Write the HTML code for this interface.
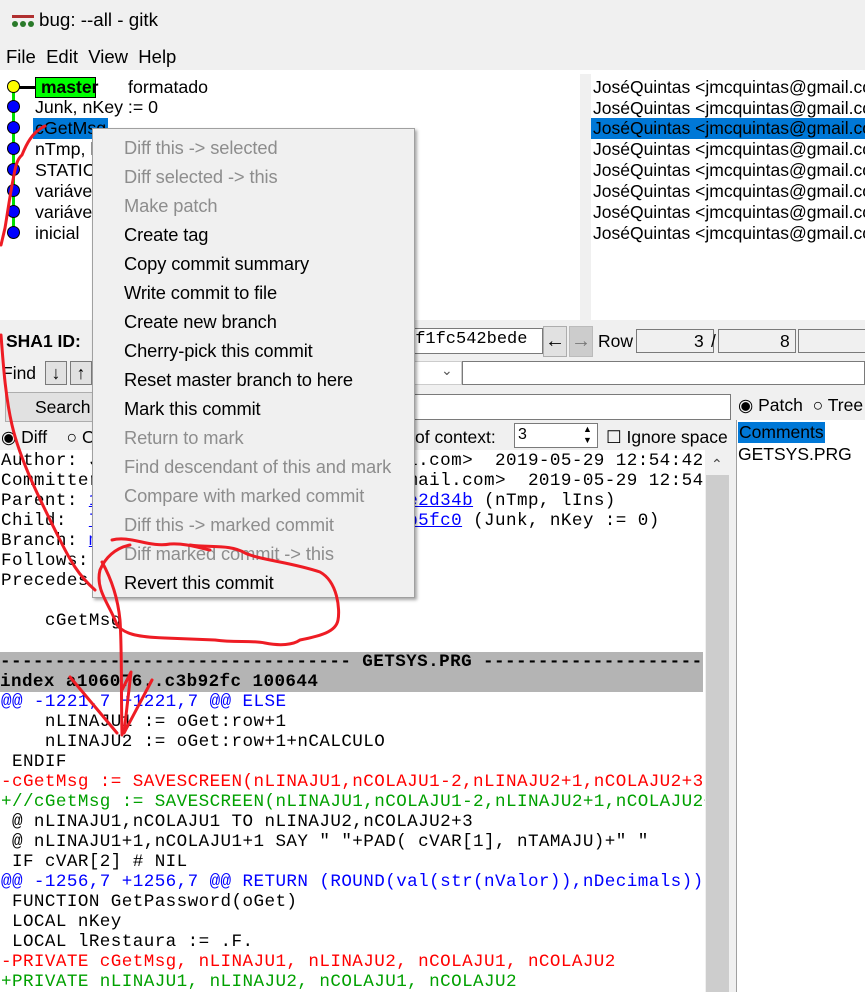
<!DOCTYPE html>
<html><head><meta charset="utf-8"><style>
*{box-sizing:border-box;margin:0;padding:0}
body{width:865px;height:992px;overflow:hidden;background:#f0f0f0;font-family:"Liberation Sans",sans-serif;position:relative;color:#000}
.a{position:absolute;white-space:pre}
.s{font-size:17.5px}
.mono{font-family:"Liberation Mono",monospace;font-size:17.6px;letter-spacing:0.42px}
.row{position:absolute;left:35px;font-size:17.8px;line-height:21px}
.auth{position:absolute;left:593px;font-size:17.5px;line-height:21px;white-space:pre}
.dot{position:absolute;left:7px;width:13px;height:13px;border-radius:50%;background:#0000ff;border:1px solid #000}
.menu{position:absolute;left:92px;top:128px;width:323px;height:470px;background:#f0f0f0;border:1px solid #a0a0a0;box-shadow:2px 2px 3px rgba(0,0,0,.35)}
.mi{position:absolute;left:31px;font-size:18.3px;white-space:pre;letter-spacing:-0.1px;line-height:20px}
.dis{color:#8d8d8d}
.box{position:absolute;background:#f0f0f0;border:1px solid #7a7a7a}
.ln{position:absolute;left:1px;line-height:20px;height:20px;white-space:pre}
</style></head><body>
<!-- title -->
<div class="a" style="left:12px;top:12px;width:22px;height:16px">
<div style="position:absolute;left:0;top:3px;width:22px;height:3px;background:#b03030"></div>
<div style="position:absolute;left:0;top:9px;width:6px;height:6px;border-radius:50%;background:#2a7a2a"></div>
<div style="position:absolute;left:8px;top:9px;width:6px;height:6px;border-radius:50%;background:#2a7a2a"></div>
<div style="position:absolute;left:16px;top:9px;width:6px;height:6px;border-radius:50%;background:#2a7a2a"></div>
</div>
<div class="a" style="left:39px;top:9px;font-size:18.8px">bug: --all - gitk</div>
<div class="a" style="left:6px;top:46px;font-size:18.5px">File&nbsp;&nbsp;Edit&nbsp;&nbsp;View&nbsp;&nbsp;Help</div>
<div class="a" style="left:0;top:70px;width:865px;height:4px;background:#fff"></div>

<!-- graph pane -->
<div class="a" style="left:0;top:74px;width:580px;height:246px;background:#fff"></div>
<div class="a" style="left:12px;top:87px;width:3px;height:146px;background:#00e000"></div>
<div class="a" style="left:14px;top:86px;width:22px;height:3px;background:#000"></div>
<div class="dot" style="top:80px;background:#ffff00"></div>
<div class="dot" style="top:100px"></div><div class="dot" style="top:121px"></div><div class="dot" style="top:142px"></div><div class="dot" style="top:163px"></div><div class="dot" style="top:184px"></div><div class="dot" style="top:205px"></div><div class="dot" style="top:226px"></div>
<div class="a" style="left:35px;top:77px;width:61px;height:21px;background:#00ff00;border:1px solid #000;font-weight:bold;font-size:17.5px;line-height:19px;padding-left:5px">master</div>
<div class="row" style="left:128px;top:77px">formatado</div>
<div class="row" style="top:97px">Junk, nKey := 0</div>
<div class="row" style="top:118px;left:33px;background:#0078d7;padding:0 2px;width:75px;height:21px">cGetMsg</div>
<div class="row" style="top:139px">nTmp, lIns</div>
<div class="row" style="top:160px">STATIC</div>
<div class="row" style="top:181px">variáveis</div>
<div class="row" style="top:202px">variáveis</div>
<div class="row" style="top:223px">inicial</div>

<!-- author pane -->
<div class="a" style="left:591px;top:74px;width:274px;height:246px;background:#fff;overflow:hidden">
<div class="auth" style="left:2px;top:3px">JoséQuintas &lt;jmcquintas@gmail.com&gt;</div>
<div class="auth" style="left:2px;top:24px">JoséQuintas &lt;jmcquintas@gmail.com&gt;</div>
<div class="auth" style="left:0;top:44px;background:#0078d7;width:280px;height:21px;padding-left:2px">JoséQuintas &lt;jmcquintas@gmail.com&gt;</div>
<div class="auth" style="left:2px;top:65px">JoséQuintas &lt;jmcquintas@gmail.com&gt;</div>
<div class="auth" style="left:2px;top:86px">JoséQuintas &lt;jmcquintas@gmail.com&gt;</div>
<div class="auth" style="left:2px;top:107px">JoséQuintas &lt;jmcquintas@gmail.com&gt;</div>
<div class="auth" style="left:2px;top:128px">JoséQuintas &lt;jmcquintas@gmail.com&gt;</div>
<div class="auth" style="left:2px;top:149px">JoséQuintas &lt;jmcquintas@gmail.com&gt;</div>
</div>

<!-- toolbar -->
<div class="a s" style="left:6px;top:331px;font-weight:bold">SHA1 ID:</div>
<div class="a" style="left:400px;top:328px;width:143px;height:26px;background:#fff;border:1px solid #7a7a7a"></div>
<div class="a mono" style="left:405px;top:330px;font-size:17px;letter-spacing:0">5f1fc542bede</div>
<div class="box" style="left:543px;top:326px;width:24px;height:31px;background:#e1e1e1;border-color:#adadad;font-size:20px;text-align:center;line-height:28px;font-weight:bold">&#8592;</div>
<div class="box" style="left:569px;top:326px;width:24px;height:31px;background:#cccccc;border-color:#bbb;font-size:20px;text-align:center;line-height:28px;color:#777">&#8594;</div>
<div class="a s" style="left:598px;top:331px">Row</div>
<div class="box" style="left:636px;top:329px;width:78px;height:24px"></div>
<div class="a s" style="left:694px;top:331px">3</div>
<div class="a s" style="left:711px;top:331px">/</div>
<div class="box" style="left:718px;top:329px;width:78px;height:24px"></div>
<div class="a s" style="left:780px;top:331px">8</div>
<div class="box" style="left:798px;top:329px;width:70px;height:24px"></div>

<div class="a s" style="left:2px;top:363px">Find</div>
<div class="box" style="left:45px;top:361px;width:22px;height:24px;background:#e1e1e1;font-size:18px;text-align:center;line-height:22px">&#8595;</div>
<div class="box" style="left:70px;top:361px;width:22px;height:24px;background:#e1e1e1;font-size:18px;text-align:center;line-height:22px">&#8593;</div>
<div class="a" style="left:250px;top:361px;width:212px;height:24px;background:#fff;border:1px solid #ccc"></div>
<div class="a" style="left:441px;top:362px;font-size:14px;color:#555">&#8964;</div>
<div class="a" style="left:462px;top:361px;width:403px;height:24px;background:#fff;border:1px solid #7a7a7a"></div>

<div class="box" style="left:5px;top:392px;width:100px;height:30px;background:#e1e1e1;border-color:#adadad"></div>
<div class="a s" style="left:35px;top:397px">Search</div>
<div class="a" style="left:400px;top:394px;width:331px;height:26px;background:#fff;border:1px solid #7a7a7a"></div>
<div class="a s" style="left:738px;top:395px">&#9673; Patch&nbsp;&nbsp;&#9675; Tree</div>

<div class="a s" style="left:1px;top:427px">&#9673; Diff&nbsp;&nbsp;&nbsp;&nbsp;&#9675; Old</div>
<div class="a s" style="left:415px;top:427px">of context:</div>
<div class="a" style="left:514px;top:423px;width:84px;height:25px;background:#fff;border:1px solid #7a7a7a"></div>
<div class="a" style="left:518px;top:426px;font-size:16px">3</div>
<div class="a" style="left:583px;top:424px;font-size:9px;line-height:11px">&#9650;<br>&#9660;</div>
<div class="a s" style="left:606px;top:427px">&#9744;&nbsp;Ignore space</div>

<!-- diff pane -->
<div class="a" style="left:0;top:450px;width:705px;height:542px;background:#fff;overflow:hidden" >
<div class="mono" style="position:absolute;left:0;top:0;width:705px">
<div class="ln" style="top:1px">Author: José Quintas &lt;jmcquintas@gmail.com&gt;  2019-05-29 12:54:42</div>
<div class="ln" style="top:21px">Committer: José Quintas &lt;jmcquintas@gmail.com&gt;  2019-05-29 12:54:42</div>
<div class="ln" style="top:41px">Parent: <span style="color:#00f;text-decoration:underline">1d3a9f0b7e6c4a2d8f1e0b9ac5134e2d34b</span> (nTmp, lIns)</div>
<div class="ln" style="top:61px">Child:  <span style="color:#00f;text-decoration:underline">7a3c1e9f2b4d6a8c0e2f4a60de85cb5fc0</span> (Junk, nKey := 0)</div>
<div class="ln" style="top:81px">Branch: <span style="color:#00f;text-decoration:underline">master</span></div>
<div class="ln" style="top:101px">Follows: </div>
<div class="ln" style="top:121px">Precedes: </div>
<div class="ln" style="top:161px">    cGetMsg</div>
<div class="ln" style="top:202px;left:0;width:703px;background:#b4b4b4;font-weight:bold">-------------------------------- GETSYS.PRG -------------------------------</div>
<div class="ln" style="top:222px;left:0;width:703px;background:#b4b4b4;font-weight:bold">index a106076..c3b92fc 100644</div>
<div class="ln" style="top:242px;color:#0000ff">@@ -1221,7 +1221,7 @@ ELSE</div>
<div class="ln" style="top:262px">    nLINAJU1 := oGet:row+1</div>
<div class="ln" style="top:282px">    nLINAJU2 := oGet:row+1+nCALCULO</div>
<div class="ln" style="top:302px"> ENDIF</div>
<div class="ln" style="top:322px;color:#ff0000">-cGetMsg := SAVESCREEN(nLINAJU1,nCOLAJU1-2,nLINAJU2+1,nCOLAJU2+3)</div>
<div class="ln" style="top:342px;color:#00a000">+//cGetMsg := SAVESCREEN(nLINAJU1,nCOLAJU1-2,nLINAJU2+1,nCOLAJU2+3)</div>
<div class="ln" style="top:362px"> @ nLINAJU1,nCOLAJU1 TO nLINAJU2,nCOLAJU2+3</div>
<div class="ln" style="top:382px"> @ nLINAJU1+1,nCOLAJU1+1 SAY " "+PAD( cVAR[1], nTAMAJU)+" "</div>
<div class="ln" style="top:402px"> IF cVAR[2] # NIL</div>
<div class="ln" style="top:422px;color:#0000ff">@@ -1256,7 +1256,7 @@ RETURN (ROUND(val(str(nValor)),nDecimals))</div>
<div class="ln" style="top:442px"> FUNCTION GetPassword(oGet)</div>
<div class="ln" style="top:462px"> LOCAL nKey</div>
<div class="ln" style="top:482px"> LOCAL lRestaura := .F.</div>
<div class="ln" style="top:502px;color:#ff0000">-PRIVATE cGetMsg, nLINAJU1, nLINAJU2, nCOLAJU1, nCOLAJU2</div>
<div class="ln" style="top:522px;color:#00a000">+PRIVATE nLINAJU1, nLINAJU2, nCOLAJU1, nCOLAJU2</div>
</div>
</div>
<!-- scrollbar -->
<div class="a" style="left:705px;top:450px;width:25px;height:542px;background:#f0f0f0"></div>
<div class="a" style="left:711px;top:456px;font-size:14px;color:#444">&#8963;</div>
<div class="a" style="left:706px;top:475px;width:23px;height:517px;background:#cdcdcd"></div>
<div class="a" style="left:736px;top:420px;width:1px;height:572px;background:#a0a0a0"></div>
<!-- file list -->
<div class="a" style="left:737px;top:420px;width:128px;height:572px;background:#fff"></div>
<div class="a s" style="left:738px;top:422px;background:#0078d7;padding:0 1px;height:21px">Comments</div>
<div class="a s" style="left:738px;top:444px">GETSYS.PRG</div>

<!-- context menu -->
<div class="menu">
<div class="mi dis" style="top:9px">Diff this -&gt; selected</div>
<div class="mi dis" style="top:38px">Diff selected -&gt; this</div>
<div class="mi dis" style="top:67px">Make patch</div>
<div class="mi" style="top:96px">Create tag</div>
<div class="mi" style="top:125px">Copy commit summary</div>
<div class="mi" style="top:154px">Write commit to file</div>
<div class="mi" style="top:183px">Create new branch</div>
<div class="mi" style="top:212px">Cherry-pick this commit</div>
<div class="mi" style="top:241px">Reset master branch to here</div>
<div class="mi" style="top:270px">Mark this commit</div>
<div class="mi dis" style="top:299px">Return to mark</div>
<div class="mi dis" style="top:328px">Find descendant of this and mark</div>
<div class="mi dis" style="top:357px">Compare with marked commit</div>
<div class="mi dis" style="top:386px">Diff this -&gt; marked commit</div>
<div class="mi dis" style="top:415px">Diff marked commit -&gt; this</div>
<div class="mi" style="top:444px">Revert this commit</div>
</div>

<!-- red scribbles -->
<svg class="a" style="left:0;top:0" width="865" height="992" viewBox="0 0 865 992">
<g fill="none" stroke="#ee1c24" stroke-width="3" stroke-linecap="round" stroke-linejoin="round">
<path d="M45,126 C32,132 26,145 22,155 C16,160 15,170 13,180 C10,195 8,210 5,228 L1,245"/>
<path d="M1,335 C3,360 5,395 12,425 C20,460 40,500 60,540 C70,560 78,575 95,590"/>
<path d="M112,540 C130,535 150,548 170,544 C185,543 200,548 210,550"/>
<path d="M190,545 C210,548 230,544 245,553 C260,560 290,562 320,572 C338,582 340,610 338,620 C336,632 320,636 300,640 C293,645 280,646 265,643 C250,640 235,643 215,640 L165,638 C140,637 125,635 117,625 C110,605 95,590 100,570 C105,558 115,548 130,545"/>
<path d="M102,562 C112,580 118,600 120,620 C122,650 121,690 122,735"/>
<path d="M70,677 L117,733 M152,680 L124,733 L131,672 L122,690"/>
</g>
</svg>
</body></html>
